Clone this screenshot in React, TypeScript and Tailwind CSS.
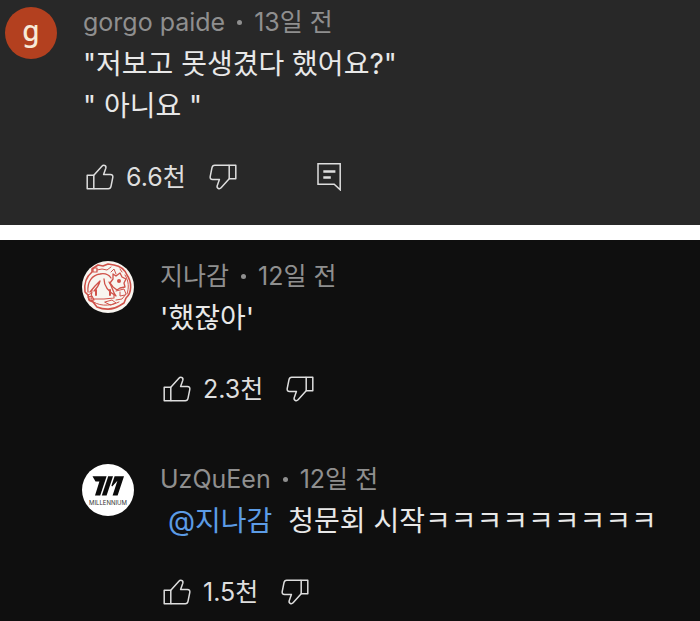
import type { ReactNode } from "react";

interface CommentData {
  id: string;
  author: string;
  time: string;
  likes: string;
  avatar: ReactNode;
  body: ReactNode;
  canReply?: boolean;
}

function ThumbIcon({ down = false }: { down?: boolean }) {
  return (
    <svg
      width="28"
      height="26"
      viewBox="0 0 28 26"
      fill="none"
      stroke="currentColor"
      strokeWidth="1.5"
      strokeLinejoin="round"
      className={down ? "rotate-180" : undefined}
      aria-hidden="true"
    >
      <path d="M1.2 11.2H7.8V24.8H1.2Z" />
      <path d="M7.8 11.2L15.9 2.2C17.3 .7 20.6 1.3 19.8 4.2L17.6 10.6H24.4C26.3 10.6 27.1 11.7 26.8 13.3L25 22.4C24.7 24 23.9 24.8 22.3 24.8H7.8" />
    </svg>
  );
}

function ReplyIcon() {
  return (
    <svg width="25" height="28" viewBox="0 0 25 28" fill="none" stroke="currentColor" aria-hidden="true">
      <path d="M1 .8H23.2V26.8L17.2 21.2H1Z" strokeWidth="1.5" />
      <path d="M6.3 8.5H18.4M6.3 14.5H13.8" strokeWidth="2.5" />
    </svg>
  );
}

function LetterAvatar() {
  return (
    <div className="flex size-[52px] items-center justify-center rounded-full bg-[#b3401f] font-['Noto_Sans'] text-[28px] leading-none font-medium text-[#f7ead8]">
      <span className="pb-1.5">g</span>
    </div>
  );
}

function StampAvatar() {
  return (
    <svg width="52" height="52" viewBox="0 0 52 52" fill="none" stroke="#d0524a" strokeLinecap="round" strokeLinejoin="round" aria-hidden="true">
      <circle cx="26" cy="26" r="26" fill="#f8f5f0" stroke="none" />
      {/* rim */}
      <path d="M10 11C4 16 2 24 3 31L6 34L7 39L11 41L15 46C22 49 31 49 37 45L42 42L44 37C50 32 50 21 45 14C43 9 38 5 32 4L26 3L21 5L16 4L10 8Z" strokeWidth="1.6" />
      <path d="M15 9L20 8L25 9L29 6M6 34L10 32M9 39C15 45 27 46 37 41M43 14C47 20 47 27 45 33" strokeWidth="1" />
      <path d="M11 7H15V11H11ZM6 36L10 35L12 39L8 40Z" strokeWidth="1.2" />
      {/* hair */}
      <path d="M6 31C5 21 10 14 18 13C23 12 27 14 29 17M8 31L13 25L18 20C17 24 15 27 12 30M22 18C22 25 27 31 34 35C31 32 31 27 27 21" strokeWidth="1.3" />
      {/* face */}
      <path d="M10 29L9 38H22L32 37V34" strokeWidth="1.1" />
      <path d="M14 29V34M28 29V34" strokeWidth="2" />
      {/* flower */}
      <path d="M31 13L34 15L38 12L40 16L44 18L42 22L43 26L38 27L35 29L31 26L28 22L31 18Z" strokeWidth="1.3" />
      <path d="M29 11L32 8L34 13M40 11L38 8" strokeWidth="1" />
      <circle cx="37" cy="20" r="2" fill="#d0524a" stroke="none" />
      {/* hand and sleeve */}
      <path d="M34 30L42 28L44 33L40 38L34 39M38 31V35L43 34M23 41L30 39L34 42L29 44Z" strokeWidth="1" />
    </svg>
  );
}

function MillenniumAvatar() {
  return (
    <svg width="52" height="52" viewBox="0 0 52 52" aria-hidden="true">
      <circle cx="26" cy="26" r="26" fill="#fff" />
      <path d="M10.5 12.3H24.6L18.2 31.5H13L17.4 17.5H13.5Z" fill="#0b0b0b" />
      <path d="M26.2 12.3H31L24.6 31.5H19.8Z" fill="#0b0b0b" />
      <path d="M32.6 12.3H42L35.6 31.5H30.6L35.4 16.8L30.2 22.4L29.4 21.8Z" fill="#0b0b0b" />
      <text x="26" y="41" textAnchor="middle" fontSize="6" fill="#333" className="font-[Inter]">
        MILLENNIUM
      </text>
    </svg>
  );
}

const topComment: CommentData = {
  id: "gorgo",
  author: "gorgo paide",
  time: "13일 전",
  likes: "6.6천",
  avatar: <LetterAvatar />,
  body: (
    <>
      "저보고 못생겼다 했어요?"
      <br />" 아니요 "
    </>
  ),
  canReply: true,
};

const replies: CommentData[] = [
  {
    id: "jinagam",
    author: "지나감",
    time: "12일 전",
    likes: "2.3천",
    avatar: <StampAvatar />,
    body: "'했잖아'",
  },
  {
    id: "uzqueen",
    author: "UzQuEen",
    time: "12일 전",
    likes: "1.5천",
    avatar: <MillenniumAvatar />,
    body: (
      <>
        <a href="#jinagam" className="ml-2 mr-4 text-[#5c9ce6]">@지나감</a>
        청문회 시작ㅋㅋㅋㅋㅋㅋㅋㅋㅋ
      </>
    ),
  },
];

function Comment({ comment }: { comment: CommentData }) {
  return (
    <article id={comment.id} className="flex gap-[26px]">
      <div className="shrink-0">{comment.avatar}</div>
      <div className="min-w-0 flex-1">
        <div className="flex items-center gap-3 text-[25px] leading-[30px] text-[#8f8f8f]">
          <span>{comment.author}</span>
          <span className="size-[5px] rounded-full bg-[#8f8f8f]" />
          <span>{comment.time}</span>
        </div>
        <p className="mt-1.5 text-[28px] leading-[42px] text-[#e8e8e8]">{comment.body}</p>
        <div className="mt-9 flex h-7 items-center pl-[3px] text-[#dedede]">
          <button type="button" className="flex items-center gap-3" aria-label={`좋아요 ${comment.likes}`}>
            <ThumbIcon />
            <span className="text-[25px] leading-7">{comment.likes}</span>
          </button>
          <button type="button" className="ml-[23px]" aria-label="싫어요">
            <ThumbIcon down />
          </button>
          {comment.canReply && (
            <button type="button" className="ml-20" aria-label="답글">
              <ReplyIcon />
            </button>
          )}
        </div>
      </div>
    </article>
  );
}

export default function App() {
  return (
    <main className="min-h-screen bg-[#0f0f0f] font-[Inter,'Noto_Sans_CJK_KR',sans-serif]">
      <section className="border-b-[15px] border-white bg-[#282828] pt-[7px] pb-[34px] pl-[5px]">
        <Comment comment={topComment} />
      </section>
      <section className="flex flex-col gap-[61px] pt-[21px] pb-[15px] pl-[82px]">
        {replies.map((reply) => (
          <Comment key={reply.id} comment={reply} />
        ))}
      </section>
    </main>
  );
}
